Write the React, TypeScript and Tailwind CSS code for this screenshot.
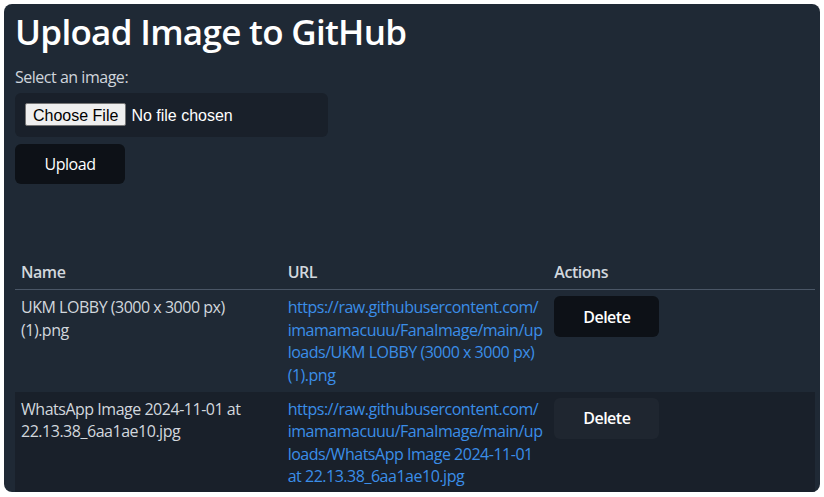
import React from 'react'

type ImageRow = {
  name: string
  // url is kept as the lines it wraps into in the table
  urlLines: string[]
}

const rows: ImageRow[] = [
  {
    name: 'UKM LOBBY (3000 x 3000 px) (1).png',
    urlLines: [
      'https://raw.githubusercontent.com/',
      'imamamacuuu/FanaImage/main/up',
      'loads/UKM LOBBY (3000 x 3000 px)',
      '(1).png',
    ],
  },
  {
    name: 'WhatsApp Image 2024-11-01 at 22.13.38_6aa1ae10.jpg',
    urlLines: [
      'https://raw.githubusercontent.com/',
      'imamamacuuu/FanaImage/main/up',
      'loads/WhatsApp Image 2024-11-01',
      'at 22.13.38_6aa1ae10.jpg',
    ],
  },
]

export default function App() {
  return (
    <div className="min-h-[497px] bg-white p-1 font-['Open_Sans',sans-serif] tracking-[-0.03em]">
      <div className="h-[488px] w-[816px] overflow-hidden rounded-lg bg-[#1f2935] px-[11px]">
        <h1 className="pt-[1px] text-[35px] leading-[54px] font-semibold tracking-[-0.02em] text-white">
          Upload Image to GitHub
        </h1>

        {/* Upload form */}
        <div className="mt-[6px]">
          <label className="block text-base leading-6 text-[#cfd5dc]">Select an image:</label>
          <div className="mt-[4px] w-[313px] rounded-md bg-[#19202a] p-2.5">
            <input
              type="file"
              className="block w-full font-['Liberation_Sans',sans-serif] text-base leading-[23px] tracking-normal text-white file:mr-[5px] file:h-[23px] file:rounded-[2px] file:border file:border-[#767676] file:bg-[#efefef] file:px-[7px] file:text-black"
            />
          </div>
          <button className="mt-[7px] h-10 w-[110px] rounded-md bg-[#0d1117] text-base font-medium text-white">
            Upload
          </button>
        </div>

        {/* Uploaded images */}
        <table className="mt-[71px] w-[800px] table-fixed border-collapse text-left text-base leading-[22.4px] text-[#d2d7dd]">
          <thead>
            <tr className="border-b border-[#4a5666]">
              <th className="w-1/3 px-1.5 py-1.5 font-semibold">Name</th>
              <th className="w-1/3 px-1.5 py-1.5 font-semibold">URL</th>
              <th className="w-1/3 px-1.5 py-1.5 font-semibold">Actions</th>
            </tr>
          </thead>
          <tbody>
            {rows.map((row, i) => (
              <tr key={row.name} className={i % 2 === 1 ? 'bg-[#19202a]' : ''}>
                <td className="px-1.5 py-1.5 align-top">{row.name}</td>
                <td className="px-1.5 py-1.5 align-top">
                  <a href="#" className="text-[#3b8ee8]">
                    {row.urlLines.map((line) => (
                      <span key={line} className="block whitespace-nowrap">
                        {line}
                      </span>
                    ))}
                  </a>
                </td>
                <td className="px-1.5 py-1.5 align-top">
                  <button
                    className={
                      i % 2 === 1
                        ? 'h-[41px] w-[105px] rounded-md bg-[#1f2630] font-semibold text-white'
                        : 'h-[41px] w-[105px] rounded-md bg-[#0d1117] font-semibold text-white'
                    }
                  >
                    Delete
                  </button>
                </td>
              </tr>
            ))}
          </tbody>
        </table>
      </div>
    </div>
  )
}
